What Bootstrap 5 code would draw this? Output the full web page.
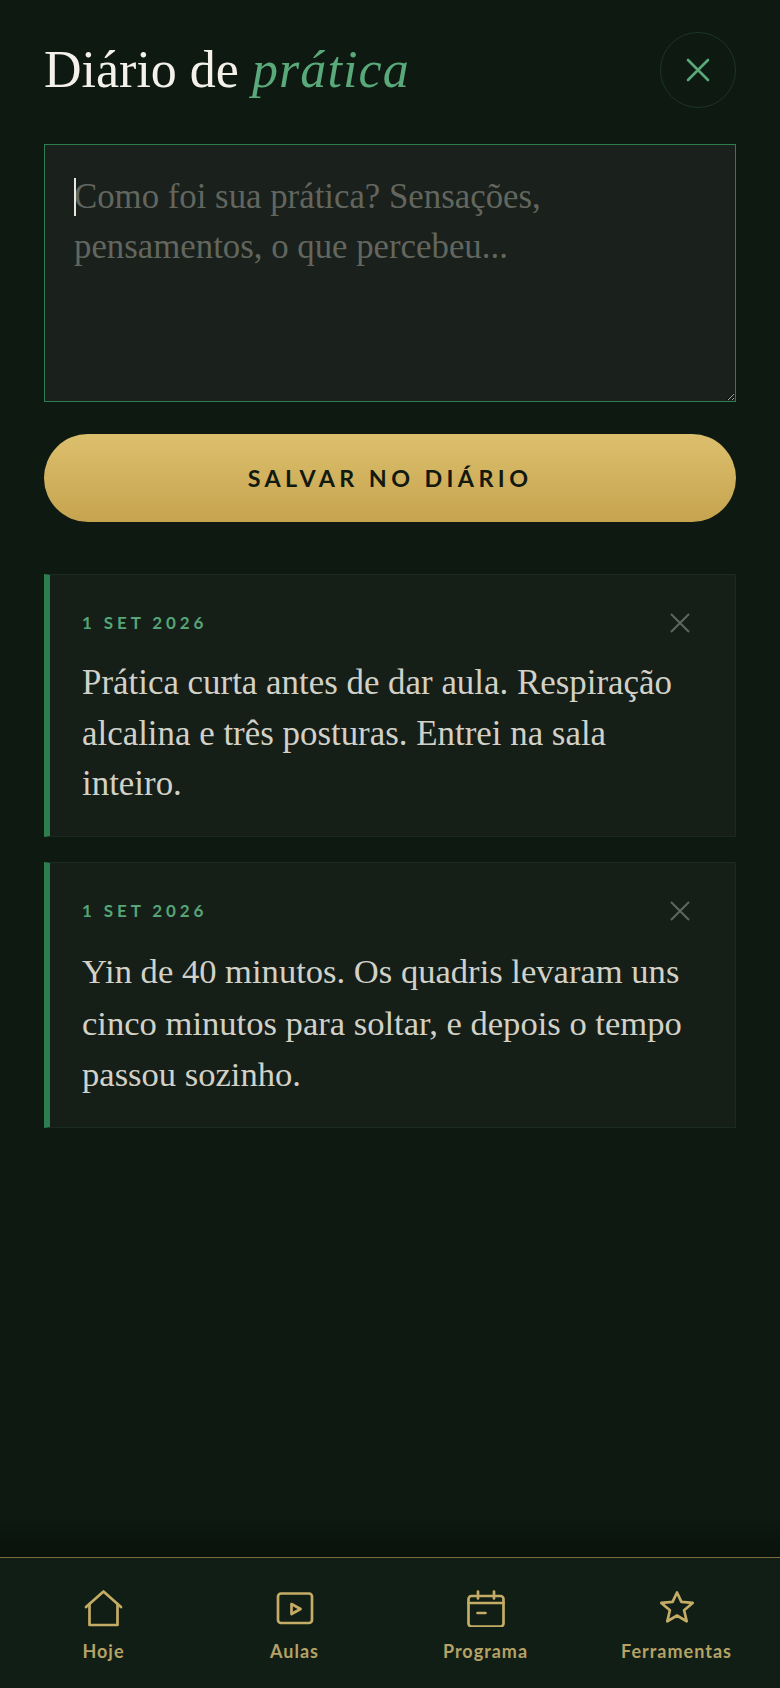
<!DOCTYPE html>
<html lang="pt-BR">
<head>
<meta charset="utf-8">
<title>Diário de prática</title>
<link href="https://cdn.jsdelivr.net/npm/bootstrap@5.3.0/dist/css/bootstrap.min.css" rel="stylesheet">
<style>
html,body{height:100%}
body{background:#0d1911;font-family:"Liberation Serif",serif;color:#e8e6df}
.shell{height:1688px}
.content{padding:32px 44px 0;background:linear-gradient(180deg,transparent calc(100% - 40px),#09120b)}
.head-title{font-family:"Liberation Serif",serif;font-weight:400;font-size:52px;line-height:62px;color:#f3f1ea;margin:0;letter-spacing:0}
.head-title em{color:#5aa97a;letter-spacing:1.1px}
.close-round{width:76px;height:76px;border:1px solid #1c3526;background:transparent;padding:0}
.entry-wrap{margin-top:36px}
.entry-input.form-control,.entry-input.form-control:focus{display:block;background:#1a201b;border:1px solid #2e7d4f;border-radius:0;height:258px;padding:27px 29px 0;font-family:"Liberation Serif",serif;font-size:34.8px;line-height:50px;color:#e8e6df;box-shadow:none;outline:0}
.entry-input::placeholder{color:#62665f;opacity:1}
.fake-caret{left:30px;top:34px;width:1.5px;height:38px;background:#e8e6df}
.save-btn.btn{display:block;width:100%;height:88px;margin-top:32px;border:0;border-radius:45px;background:linear-gradient(180deg,#dcbf6d,#c6a44f);color:#12190f;font-family:Lato,sans-serif;font-weight:700;font-size:23.3px;letter-spacing:4.4px;text-transform:uppercase}
.entries{margin-top:52px;gap:25px}
.entry-box{background:#151f18;border:1px solid #1a2a20;border-left:6px solid #2e7d4f;padding:36px 43px 0 32px}
.entry-one{height:263px}
.entry-two{height:266px}
.entry-date{font-family:Lato,sans-serif;font-weight:700;font-size:17px;line-height:22px;letter-spacing:3.9px;color:#56a477}
.entry-del{background:transparent;border:0;padding:0;width:24px;height:24px;line-height:0}
.entry-text{margin:23px 0 0;font-size:34.9px;line-height:50.5px;color:#d2d1c8}
.entry-two .entry-text{font-size:34.6px;line-height:51.5px}
.tabbar{height:131px;background:#111e15;border-top:1px solid #7a6c3c;padding:0 8px}
.tab-item{color:#b5a266;font-family:Lato,sans-serif;font-weight:700;font-size:18px;line-height:24px;letter-spacing:1px;padding-top:31px;text-decoration:none}
.tab-item svg{display:block;margin-bottom:12px}
</style>
</head>
<body>
<div class="shell d-flex flex-column">
  <main class="content flex-grow-1">
    <header class="d-flex justify-content-between align-items-center">
      <h1 class="head-title">Diário de <em>prática</em></h1>
      <button type="button" class="close-round rounded-circle d-flex align-items-center justify-content-center" aria-label="Fechar">
        <svg width="24" height="24" viewBox="0 0 24 24" fill="none" stroke="#5aa97a" stroke-width="2.6" stroke-linecap="round"><path d="M2 2l20 20M22 2L2 22"/></svg>
      </button>
    </header>
    <div class="entry-wrap position-relative">
      <textarea class="entry-input form-control" placeholder="Como foi sua prática? Sensações, pensamentos, o que percebeu..."></textarea>
      <span class="fake-caret position-absolute"></span>
    </div>
    <button type="button" class="save-btn btn">Salvar no diário</button>
    <section class="entries d-flex flex-column">
      <article class="entry-box entry-one">
        <div class="d-flex justify-content-between align-items-center">
          <span class="entry-date">1 SET 2026</span>
          <button type="button" class="entry-del" aria-label="Excluir"><svg width="24" height="24" viewBox="0 0 24 24" fill="none" stroke="#5d6660" stroke-width="2"><path d="M3 3l18 18M21 3L3 21"/></svg></button>
        </div>
        <p class="entry-text">Prática curta antes de dar aula. Respiração alcalina e três posturas. Entrei na sala inteiro.</p>
      </article>
      <article class="entry-box entry-two">
        <div class="d-flex justify-content-between align-items-center">
          <span class="entry-date">1 SET 2026</span>
          <button type="button" class="entry-del" aria-label="Excluir"><svg width="24" height="24" viewBox="0 0 24 24" fill="none" stroke="#5d6660" stroke-width="2"><path d="M3 3l18 18M21 3L3 21"/></svg></button>
        </div>
        <p class="entry-text">Yin de 40 minutos. Os quadris levaram uns cinco minutos para soltar, e depois o tempo passou sozinho.</p>
      </article>
    </section>
  </main>
  <nav class="tabbar d-flex">
    <a class="tab-item col-3 d-flex flex-column align-items-center" href="#">
      <svg width="40" height="38" viewBox="0 0 40 38" fill="none" stroke="#c4ab66" stroke-width="2.7" stroke-linejoin="round" stroke-linecap="round"><path d="M2 18L19.500 2.500 37 18"/><path d="M5.500 15v21h28V15"/></svg>Hoje</a>
    <a class="tab-item col-3 d-flex flex-column align-items-center" href="#">
      <svg width="40" height="38" viewBox="0 0 40 38" fill="none" stroke="#c4ab66" stroke-width="2.7" stroke-linejoin="round"><rect x="3" y="4.500" width="34" height="29.500" rx="3"/><path d="M16.500 15l9 5-9 5z"/></svg>Aulas</a>
    <a class="tab-item col-3 d-flex flex-column align-items-center" href="#">
      <svg width="40" height="38" viewBox="0 0 40 38" fill="none" stroke="#c4ab66" stroke-width="2.7" stroke-linecap="round"><rect x="2.500" y="7" width="35" height="30.500" rx="3"/><path d="M2.500 14h35M12 2.500v7M28 2.500v7M11.500 24h8"/></svg>Programa</a>
    <a class="tab-item col-3 d-flex flex-column align-items-center" href="#">
      <svg width="40" height="38" viewBox="0 0 40 38" fill="none" stroke="#c4ab66" stroke-width="2.7" stroke-linejoin="round"><path d="M20 3.500l4.400 9.400 11.300 1-8.600 7.400 2.600 11-9.700-5.800-9.700 5.800 2.600-11-8.600-7.400 11.300-1z"/></svg>Ferramentas</a>
  </nav>
</div>
<script src="https://cdn.jsdelivr.net/npm/bootstrap@5.3.0/dist/js/bootstrap.bundle.min.js"></script>
</body>
</html>
